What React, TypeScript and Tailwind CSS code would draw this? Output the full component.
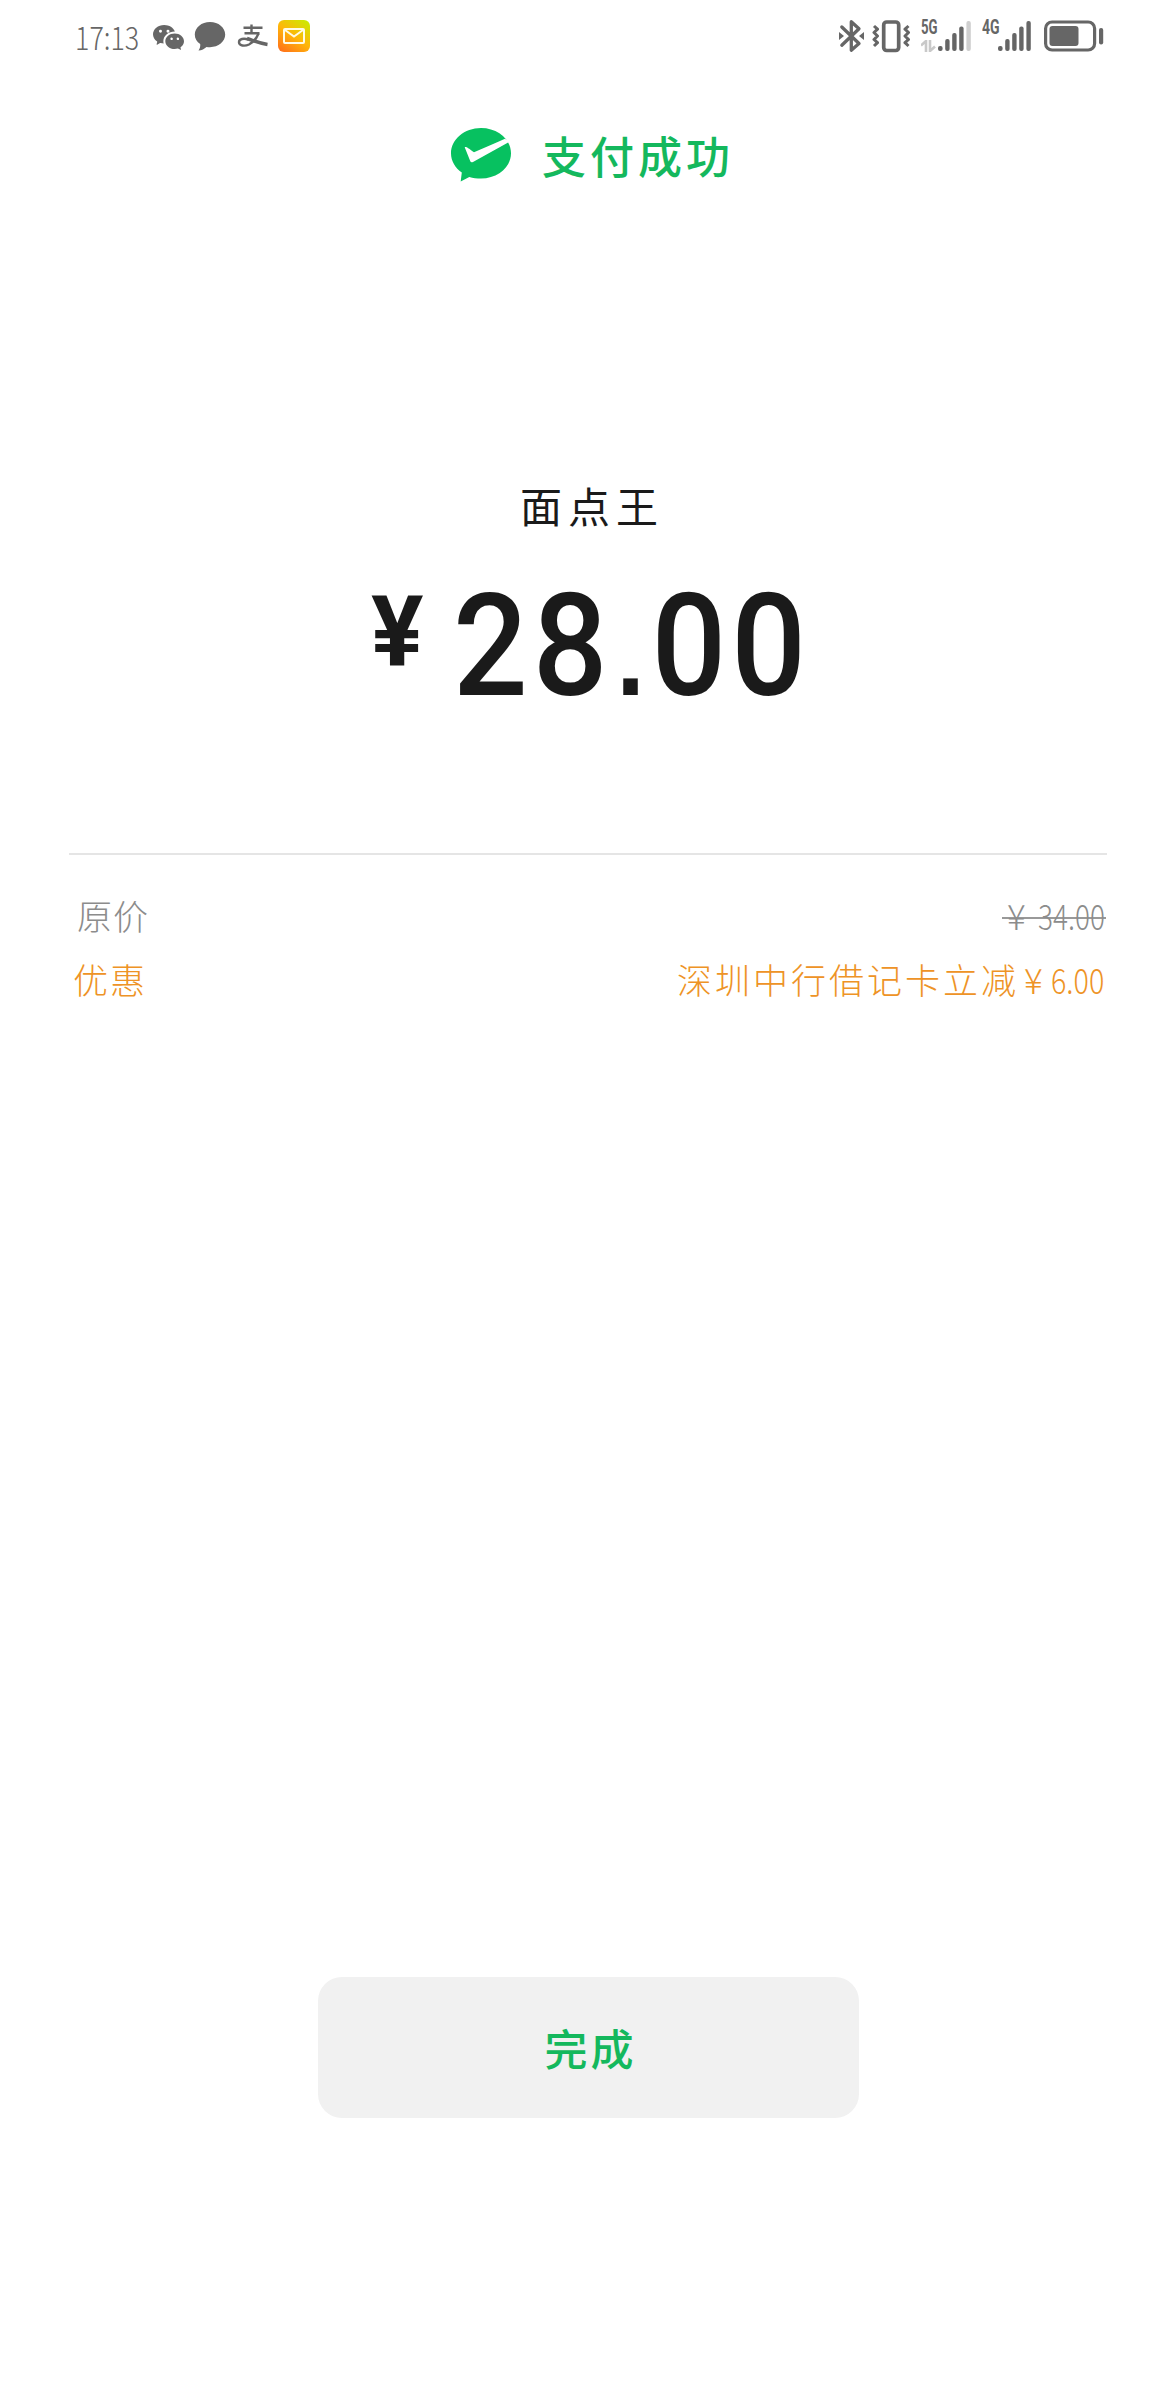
import { BsWechat } from "react-icons/bs";

const grey = "#666666";

function Bubble() {
  return (
    <svg width="32" height="32" viewBox="0 0 32 32" className="shrink-0" fill={grey}>
      <path d="M16 2C7.600 2 .8 7.500.8 14.600c0 4.200 2.100 7.300 5.400 9.500.3 2.600-.3 4.700-1.700 6.300 3.300-.2 5.900-1.500 8-3.500 1.100.2 2.200.3 3.500.3 8.400 0 15.200-5.500 15.200-12.600S24.400 2 16 2z" />
    </svg>
  );
}

function AlipayMark() {
  return (
    <svg width="31" height="26" viewBox="0 0 31 26" className="shrink-0" fill="none" stroke={grey}>
      <path d="M14.500 1.500v9M6.500 4.700h19M7.500 10.300h15" strokeWidth="2.400" />
      <path d="M21.500 10.500c-2 5-5.500 9-9.500 11-4.500 2-10 1.300-10-2.200s4.800-4.300 9.500-2.700" strokeWidth="2.400" />
      <path d="M10 15.500c6 1.800 11 4.500 20.500 6" strokeWidth="3.400" />
    </svg>
  );
}

function MailApp() {
  return (
    <div className="flex size-8 shrink-0 items-center justify-center rounded-[6px] bg-linear-[35deg] from-[#ff6a1c] via-[#ffb60a] to-[#c6f000]">
      <svg width="22" height="16" viewBox="0 0 22 16" fill="none" stroke="#fffbe6" strokeWidth="2">
        <rect x="1" y="1" width="20" height="14" rx="1" />
        <path d="M2 2l9 6.500L20 2" />
      </svg>
    </div>
  );
}

function Bluetooth() {
  return (
    <svg width="25" height="34" viewBox="0 0 25 34" className="shrink-0" fill="none" stroke={grey}>
      <path d="M2.800 8l17.200 16.500-7.700 6.700v-28.500l7.700 7-17.200 16.500" strokeWidth="3.300" strokeLinejoin="round" strokeLinecap="round" />
      <path d="M0 13l5 4-5 4zM25 13l-5 4 5 4z" fill={grey} stroke="none" />
    </svg>
  );
}

function Vibrate() {
  return (
    <svg width="38" height="33" viewBox="0 0 38 33" className="shrink-0" fill="none" stroke={grey} strokeLinejoin="round">
      <rect x="11.700" y="2" width="15" height="28.500" rx="3" strokeWidth="3.700" />
      <path d="M2 6l3.500 3.200L2 12.500 5.500 16 2 19.500l3.500 3.200L2 26M36.500 6L33 9.200l3.500 3.300L33 16l3.500 3.500-3.500 3.200 3.500 3.300" strokeWidth="3" />
    </svg>
  );
}

function Bars({ lastColor }: { lastColor: string }) {
  return (
    <svg width="34" height="32" viewBox="0 0 34 32" className="shrink-0" fill={grey}>
      <rect x="0" y="26" width="4.600" height="5" rx="2" />
      <rect x="7.200" y="19" width="4.400" height="12" rx="2" />
      <rect x="14.200" y="13" width="4.400" height="18" rx="2" />
      <rect x="21.200" y="6.500" width="4.400" height="24.500" rx="2" />
      <rect x="28.400" y="1" width="4.400" height="30" rx="2" fill={lastColor} />
    </svg>
  );
}

function Battery() {
  return (
    <svg width="60" height="32" viewBox="0 0 60 32" className="shrink-0">
      <rect x="1.600" y="2" width="49" height="28" rx="6.500" fill="none" stroke={grey} strokeWidth="3.200" />
      <rect x="5.500" y="6" width="29" height="20" rx="3" fill={grey} />
      <rect x="55" y="8" width="4.200" height="16.500" rx="2" fill={grey} />
    </svg>
  );
}

function SuccessMark() {
  return (
    <svg width="61" height="54" viewBox="0 0 61 54" className="shrink-0">
      <path
        d="M30 0C13.400 0 0 11.300 0 25.300c0 7.900 4.200 14.600 10.800 19.300L9.700 53.500l8.600-4.600c3.700 1.100 7.600 1.700 11.700 1.700 16.600 0 30-11.300 30-25.300S46.600 0 30 0z"
        fill="#07c160"
      />
      <path d="M13.700 19.200c1.200-.8 2.200-.3 9.300 5C35 19 45.500 14.500 54 10.800l4.500 3L22 34c-1.300.7-2.300.4-2.700-.8z" fill="#fff" />
    </svg>
  );
}

export default function App() {
  return (
    <div className="flex h-[2400px] w-[1176px] flex-col bg-white font-['Noto_Sans_CJK_SC',sans-serif]">
      <header className="flex h-[72px] items-center justify-between pr-[72px] pl-[75px] text-[#666666]">
        <div className="flex items-center">
          <span className="w-[78px] text-[32px] leading-none font-light">
            <span className="inline-block origin-left scale-x-[0.84]">17:13</span>
          </span>
          <BsWechat size={31} className="mr-[10px] shrink-0" />
          <Bubble />
          <div className="w-[11px]" />
          <AlipayMark />
          <div className="w-[10px]" />
          <MailApp />
        </div>
        <div className="flex items-center">
          <Bluetooth />
          <div className="w-2" />
          <Vibrate />
          <div className="ml-[11px] flex h-8 w-[17px] flex-col justify-between font-[Roboto,sans-serif] text-[20px] leading-[15px] font-bold">
            <span className="w-6 origin-left scale-x-[0.66]">5G</span>
            <svg width="15" height="12" viewBox="0 0 15 12" fill="none" stroke="#c9c9c9" strokeWidth="2.600">
              <path d="M0 5.500L5 1v11M9 0v11l5-4.500" />
            </svg>
          </div>
          <Bars lastColor="#cfcfcf" />
          <div className="ml-[10px] h-8 w-[16px] font-[Roboto,sans-serif] text-[20px] leading-[15px] font-bold">
            <span className="inline-block origin-left scale-x-[0.7]">4G</span>
          </div>
          <Bars lastColor="#666666" />
          <div className="w-[12px]" />
          <Battery />
        </div>
      </header>

      <main className="flex flex-1 flex-col">
        <div className="mt-[55px] flex h-[56px] items-center pl-[451px]">
          <SuccessMark />
          <h1 className="ml-[30px] text-[44px] leading-none font-medium tracking-[4px] text-[#14b85d]">支付成功</h1>
        </div>

        <section className="flex flex-col items-center">
          <p className="mt-[292px] pl-[8px] text-[42px] leading-[60px] tracking-[6px] text-[#1a1a1a]">面点王</p>
          <div className="mt-[38px] flex h-[144px] w-full items-start pl-[371px] font-[Roboto,sans-serif] text-[#1a1a1a]">
            <span className="mt-[11px] w-[82px] text-[98px] leading-none font-bold">¥</span>
            <span className="mt-px origin-left scale-x-[0.92] text-[143px] leading-[144px] font-medium tracking-[5.500px]">
              28<span className="ml-[4px] font-['Liberation_Sans',sans-serif] text-[112px] leading-none font-bold tracking-[7px]">.</span>00
            </span>
          </div>
        </section>

        <section className="mx-[69px] mt-[136px] border-t-2 border-[#e5e5e5] pt-[28px] text-[35px] leading-[64px] font-light">
          <div className="flex justify-between pr-px pl-[8px] text-[#8c8c8c]">
            <span className="tracking-[1px]">原价</span>
            <span className="flex w-[104px] bg-[linear-gradient(#999,#999)] bg-[length:100%_2px] bg-[position:0_34px] bg-no-repeat pl-[5px]">
              <span className="w-[31px] shrink-0">¥</span>
              <span className="inline-block w-[69px] shrink-0 origin-left scale-x-[0.8]">34.00</span>
            </span>
          </div>
          <div className="flex justify-between pr-[2px] pl-[4px] text-[#ee9326]">
            <span className="tracking-[2px]">优惠</span>
            <span className="flex">
              <span className="tracking-[3px]">深圳中行借记卡立减</span>
              <span className="flex w-[86px] pl-[5px]">
                <span className="w-[27px] shrink-0">¥</span>
                <span className="inline-block w-[66px] shrink-0 origin-left scale-x-[0.82]">6.00</span>
              </span>
            </span>
          </div>
        </section>

        <button className="mt-[966px] h-[141px] w-[541px] self-center rounded-[24px] bg-[#f1f1f1] pl-[5px] text-[43px] font-medium tracking-[3px] text-[#14b85d]">
          完成
        </button>
      </main>
    </div>
  );
}
